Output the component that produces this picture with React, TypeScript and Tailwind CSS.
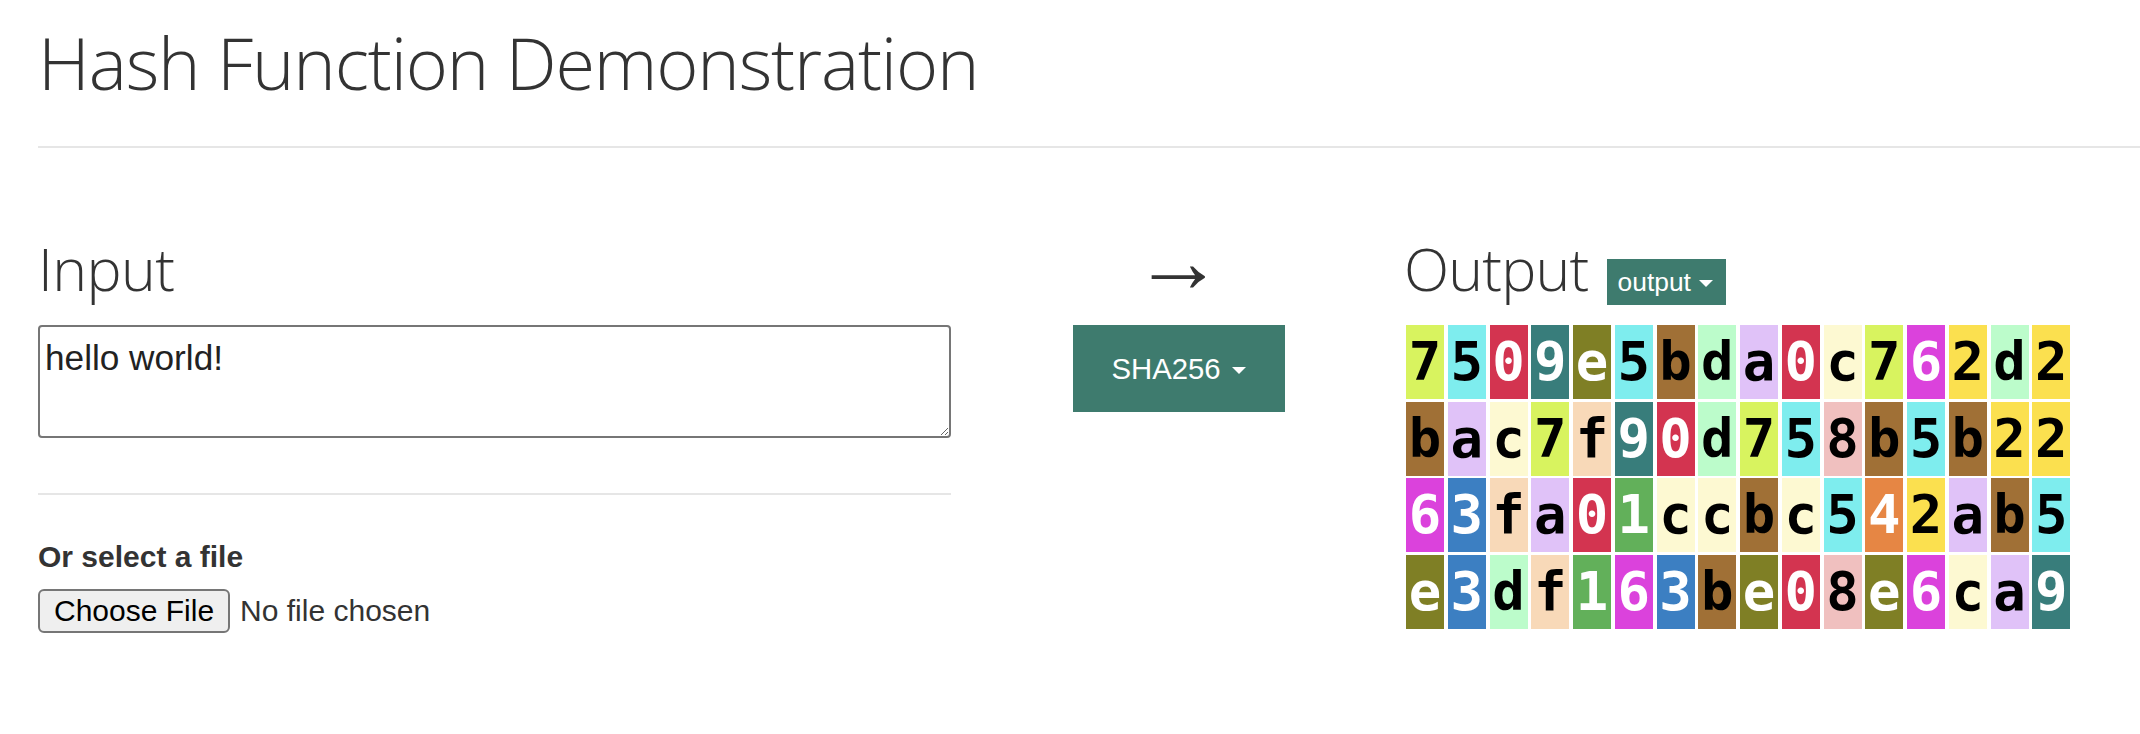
import React from "react";

// SHA256("hello world!")
const DIGEST = "7509e5bda0c762d2bac7f90d758b5b2263fa01ccbc542ab5e3df163be08e6ca9";

// one colour per hex nibble
const NIBBLE_STYLES: Record<string, string> = {
  "0": "bg-[#d33450] text-white",
  "1": "bg-[#62b05a] text-white",
  "2": "bg-[#fbe04f] text-black",
  "3": "bg-[#3c7fc2] text-white",
  "4": "bg-[#e68644] text-white",
  "5": "bg-[#7eedee] text-black",
  "6": "bg-[#db42dc] text-white",
  "7": "bg-[#d8f35f] text-black",
  "8": "bg-[#f0c0bf] text-black",
  "9": "bg-[#387d7b] text-white",
  a: "bg-[#e0c2f8] text-black",
  b: "bg-[#a07036] text-black",
  c: "bg-[#fdf9d2] text-black",
  d: "bg-[#bcfccb] text-black",
  e: "bg-[#7f7f25] text-white",
  f: "bg-[#f8d9b8] text-black",
};

function Caret({ className = "" }: { className?: string }) {
  return (
    <span
      className={`inline-block w-0 h-0 border-t-[7.5px] border-t-white border-x-[7.5px] border-x-transparent ${className}`}
    />
  );
}

function HashGrid({ digest }: { digest: string }) {
  return (
    <div className="grid grid-cols-[repeat(16,38px)] gap-x-[3.75px] gap-y-[2.5px]">
      {digest.split("").map((ch, i) => (
        <div
          key={i}
          className={`h-[74px] flex items-center justify-center font-['DejaVu_Sans_Mono',monospace] font-bold text-[54px] leading-none ${NIBBLE_STYLES[ch]}`}
        >
          {ch}
        </div>
      ))}
    </div>
  );
}

export default function App() {
  return (
    <div className="h-screen overflow-hidden bg-white pl-[38px] text-[#333] font-['Liberation_Sans',Arial,sans-serif]">
      <h1 className="mt-[26px] h-[72px] font-['Open_Sans',sans-serif] font-light text-[72px] leading-none text-[#333] tracking-[-1.15px]">
        Hash Function Demonstration
      </h1>
      <hr className="mt-[48px] border-0 border-t-2 border-[#e6e6e6]" />

      <div className="flex mt-[91px]">
        {/* input side */}
        <div className="w-[913px] shrink-0">
          <h2 className="h-[59px] mb-[27px] font-['Open_Sans',sans-serif] font-light text-[59px] leading-none tracking-[-0.6px]">
            Input
          </h2>
          <textarea
            defaultValue="hello world!"
            className="block w-full h-[113px] px-[5px] pt-[11px] pb-[4px] border-2 border-[#767676] rounded-[4px] text-[35.2px] leading-[1.15] text-[#222] font-['Liberation_Sans',Arial,sans-serif] outline-none"
          />
          <hr className="mt-[55px] border-0 border-t-2 border-[#e6e6e6]" />
          <label className="block mt-[47px] h-[30px] font-bold text-[30px] leading-none text-[#333]">
            Or select a file
          </label>
          <div className="flex items-center mt-[17px]">
            <button className="h-[44px] px-[14px] border-2 border-[#767676] rounded-[6px] bg-[#efefef] text-[30px] leading-none text-black">
              Choose File
            </button>
            <span className="ml-[10px] text-[30px] leading-none text-[#333]">No file chosen</span>
          </div>
        </div>

        {/* hash algorithm picker */}
        <div className="w-[455px] shrink-0 flex flex-col items-center">
          <div className="h-[59px] mb-[27px] pb-[16px] flex items-center justify-center text-[90px] leading-none text-[#333]">
            →
          </div>
          <button className="w-[212px] h-[87px] flex items-center justify-center gap-[11px] bg-[#3e7b6e] text-white text-[29.3px] leading-none">
            SHA256
            <Caret className="mt-[3px]" />
          </button>
        </div>

        {/* digest */}
        <div className="flex-1">
          <div className="h-[59px] mb-[27px] flex items-baseline">
            <h2 className="-ml-[2px] font-['Open_Sans',sans-serif] font-light text-[59px] leading-none tracking-[-0.8px]">
              Output
            </h2>
            <button className="ml-[18px] h-[46px] pl-[11px] pr-[13px] inline-flex items-center bg-[#3e7b6e] text-white text-[26.4px] leading-none">
              output
              <Caret className="ml-[8px] mt-[2px]" />
            </button>
          </div>
          <HashGrid digest={DIGEST} />
        </div>
      </div>
    </div>
  );
}
